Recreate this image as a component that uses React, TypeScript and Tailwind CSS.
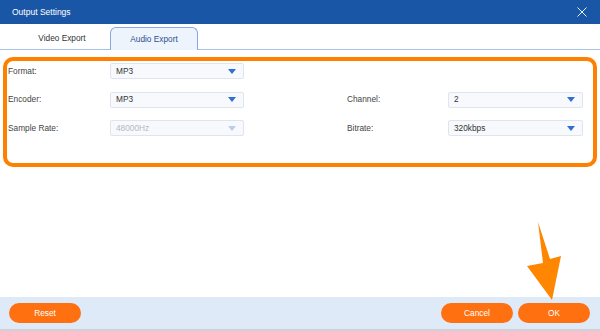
import { ReactNode } from "react";

function Caret({ disabled }: { disabled?: boolean }) {
  return (
    <svg width="8" height="5" viewBox="0 0 8 5" className="shrink-0">
      <path d="M0 0h8L4 5z" fill={disabled ? "#bccde6" : "#2f6fd3"} />
    </svg>
  );
}

function Select({ value, disabled }: { value: string; disabled?: boolean }) {
  return (
    <div className="flex h-4 items-center justify-between rounded-[2px] border border-[#dfe5ef] bg-[#f7f9fc] pl-[5px] pr-[7px]">
      <span className={disabled ? "text-[#b4bac4]" : "text-[#333]"}>{value}</span>
      <Caret disabled={disabled} />
    </div>
  );
}

function Label({ children }: { children: ReactNode }) {
  return <div className="flex h-4 items-center pl-px text-[#444]">{children}</div>;
}

function Button({ children }: { children: ReactNode }) {
  return (
    <button className="flex h-5 w-[72px] items-center justify-center rounded-full bg-[#ff7010] text-white">
      {children}
    </button>
  );
}

export default function App() {
  return (
    <div
      className="relative flex h-[331px] w-[600px] flex-col overflow-hidden bg-white text-[8.3px]"
      style={{ fontFamily: '"Liberation Sans", Arial, sans-serif' }}
    >
      <div className="flex h-6 shrink-0 items-center justify-between bg-[#1a56a6] pl-3 pr-[13px] text-white">
        <span className="text-[8.5px]">Output Settings</span>
        <svg width="10" height="10" viewBox="0 0 10 10">
          <path d="M0.5 0.5l9 9M9.5 0.5l-9 9" stroke="#e8eefa" strokeWidth="1" />
        </svg>
      </div>

      <div className="flex h-[26px] shrink-0 items-end gap-1 border-b border-[#a9c1e6] pl-[18px]">
        <div className="flex h-[22px] w-[88px] items-center justify-center text-[#333]">
          Video Export
        </div>
        <div className="-mb-px flex h-[23px] w-[88px] items-center justify-center rounded-t-[6px] border border-b-0 border-[#87a9dd] bg-[#eef4fc] text-[#2c4f8f]">
          Audio Export
        </div>
      </div>

      <div className="mx-[3px] mt-[7px] h-[110px] rounded-[10px] border-4 border-[#ff8000] pt-[2px] pr-2">
        <div className="grid grid-cols-[103px_134px_102px_102px_135px] gap-y-[12.5px]">
          <Label>Format:</Label>
          <Select value="MP3" />
          <div className="col-span-3" />

          <Label>Encoder:</Label>
          <Select value="MP3" />
          <div />
          <Label>Channel:</Label>
          <Select value="2" />

          <Label>Sample Rate:</Label>
          <Select value="48000Hz" disabled />
          <div />
          <Label>Bitrate:</Label>
          <Select value="320kbps" />
        </div>
      </div>

      <div className="flex-1" />

      <div className="flex h-8 shrink-0 items-center justify-between bg-[#dfeaf8] pl-[9px] pr-[10px]">
        <Button>Reset</Button>
        <div className="flex gap-[5px]">
          <Button>Cancel</Button>
          <Button>OK</Button>
        </div>
      </div>
      <div className="h-[2px] shrink-0 bg-[#cdd2d9]" />

      <svg
        className="absolute left-[520px] top-[215px]"
        width="50"
        height="90"
        viewBox="0 0 50 90"
      >
        <path d="M18 7L30 44L41 41L32 85L7 51L23 48Z" fill="#ff8600" />
      </svg>
    </div>
  );
}
